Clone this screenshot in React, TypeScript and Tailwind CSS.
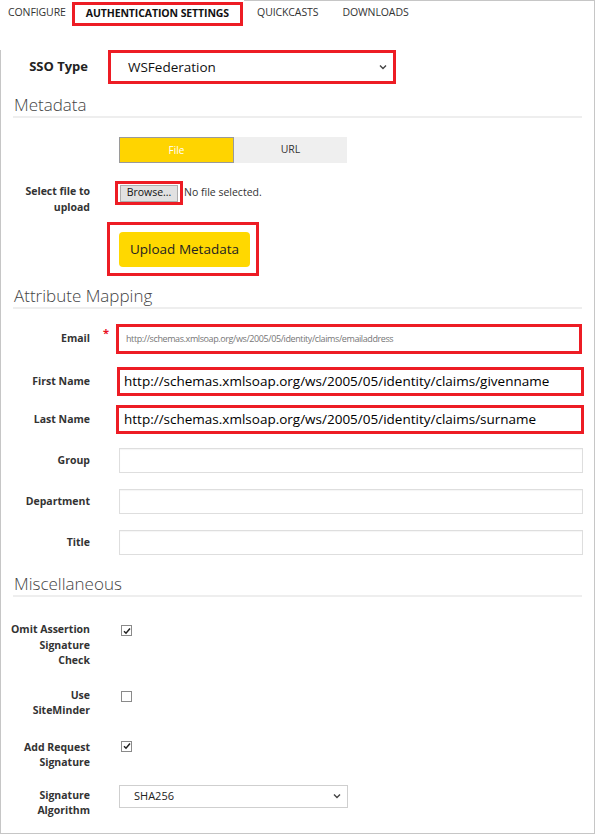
import React from "react";

function Check({ on }: { on: boolean }) {
  return (
    <div className="w-[11px] h-[11px] border border-[#8a8a8a] bg-white flex items-center justify-center">
      {on && (
        <svg width="8" height="8" viewBox="0 0 8 8">
          <path d="M1 4.2 L3 6.2 L7 1.5" fill="none" stroke="#222" strokeWidth="1.5" />
        </svg>
      )}
    </div>
  );
}

function Chevron() {
  return (
    <svg width="8" height="6" viewBox="0 0 8 6">
      <path d="M1 1.5 L4 4.5 L7 1.5" fill="none" stroke="#444" strokeWidth="1.4" />
    </svg>
  );
}

function SectionTitle({ children }: { children: React.ReactNode }) {
  return (
    <div className="mx-[12px] border-b-2 border-[#eeeeee] pb-[1px]">
      <h2 className="text-[17px] leading-[20px] font-light text-[#444] pl-[1px]">{children}</h2>
    </div>
  );
}

function Label({ children }: { children: React.ReactNode }) {
  return (
    <div className="w-[89px] shrink-0 text-right text-[10.5px] leading-[15.5px] font-bold text-[#333]">
      {children}
    </div>
  );
}

function PlainInput() {
  return <div className="ml-[29px] w-[464px] h-[25px] border border-[#dedede] bg-white shadow-[inset_0_1px_1px_rgba(0,0,0,0.04)]" />;
}

export default function App() {
  return (
    <div className="relative w-[595px] h-[834px] bg-white border-r border-b border-[#c6c6c6] font-['Open_Sans',sans-serif] text-[#333] overflow-hidden">
      {/* tabs */}
      <div className="relative h-[30px] flex items-start pt-[4px] text-[10.5px] tracking-[-0.1px] text-[#333]">
        <div className="absolute top-0 left-[244px] right-0 h-px bg-[#c6c6c6]" />
        <span className="ml-[8px] mt-[1px]">CONFIGURE</span>
        <span className="ml-[6px] -mt-[2px] border-[3px] border-[#ed1c24] px-[11px] py-[1px] font-bold text-[#111]">
          AUTHENTICATION SETTINGS
        </span>
        <span className="ml-[14px] mt-[1px]">QUICKCASTS</span>
        <span className="ml-[24px] mt-[1px]">DOWNLOADS</span>
      </div>

      <div className="border-l border-[#c6c6c6] h-[804px]">
        {/* SSO Type */}
        <div className="flex items-center mt-[20px]">
          <div className="w-[87px] text-right text-[13px] font-bold text-[#222]">SSO Type</div>
          <div className="ml-[20px] w-[288px] h-[34px] border-[3px] border-[#ed1c24] bg-white flex items-center justify-between pl-[17px] pr-[6px]">
            <span className="text-[13.5px] text-[#111]">WSFederation</span>
            <Chevron />
          </div>
        </div>

        <div className="mt-[11px]">
          <SectionTitle>Metadata</SectionTitle>
        </div>

        {/* File / URL toggle */}
        <div className="flex ml-[118px] mt-[19px] h-[26px] w-[228px]">
          <div className="w-[115px] h-full bg-[#ffd400] border border-[#9a9a9a] flex items-center justify-center text-[10px] text-white">
            File
          </div>
          <div className="flex-1 h-full bg-[#efefef] flex items-center justify-center text-[10.5px] text-[#333]">
            URL
          </div>
        </div>

        {/* Select file */}
        <div className="flex items-start mt-[18px]">
          <div className="pt-[3px]">
            <Label>
              Select file to
              <br />
              upload
            </Label>
          </div>
          <div className="ml-[25px] h-[24px] w-[68px] border-[3px] border-[#ed1c24] flex items-center justify-center">
            <div className="h-[17px] w-[58px] bg-[#e1e1e1] border border-[#adadad] flex items-center justify-center text-[10.5px] text-[#111]">
              Browse...
            </div>
          </div>
          <span className="ml-[1px] mt-[4px] text-[10.5px] text-[#333]">No file selected.</span>
        </div>

        {/* Upload */}
        <div className="ml-[106px] mt-[7px] w-[152px] h-[54px] border-[3px] border-[#ed1c24] pl-[9px] pt-[7px]">
          <div className="w-[131px] h-[35px] bg-[#ffd800] rounded-[4px] flex items-center justify-center text-[13.5px] text-[#222]">
            Upload Metadata
          </div>
        </div>

        <div className="mt-[10px]">
          <SectionTitle>Attribute Mapping</SectionTitle>
        </div>

        {/* Email */}
        <div className="flex items-center mt-[15px]">
          <Label>Email</Label>
          <div className="relative w-[26px] h-[30px]">
            <span className="absolute left-[13px] top-[1px] text-[11px] text-[#e81123] font-bold">*</span>
          </div>
          <div className="w-[466px] h-[30px] border-[3px] border-[#ed1c24] flex items-center pl-[7px]">
            <span className="text-[9px] text-[#777] tracking-[-0.4px]">
              http://schemas.xmlsoap.org/ws/2005/05/identity/claims/emailaddress
            </span>
          </div>
        </div>

        {/* First Name */}
        <div className="flex items-center mt-[13px]">
          <Label>First Name</Label>
          <div className="ml-[27px] w-[467px] h-[29px] border-[3px] border-[#ed1c24] flex items-center pl-[4px]">
            <span className="text-[13.5px] text-black">http://schemas.xmlsoap.org/ws/2005/05/identity/claims/givenname</span>
          </div>
        </div>

        {/* Last Name */}
        <div className="flex items-center mt-[9px]">
          <Label>Last Name</Label>
          <div className="ml-[26px] w-[468px] h-[29px] border-[3px] border-[#ed1c24] flex items-center pl-[5px]">
            <span className="text-[13.5px] text-black">http://schemas.xmlsoap.org/ws/2005/05/identity/claims/surname</span>
          </div>
        </div>

        <div className="flex items-center mt-[14px]">
          <Label>Group</Label>
          <PlainInput />
        </div>
        <div className="flex items-center mt-[16px]">
          <Label>Department</Label>
          <PlainInput />
        </div>
        <div className="flex items-center mt-[16px]">
          <Label>Title</Label>
          <PlainInput />
        </div>

        <div className="mt-[19px]">
          <SectionTitle>Miscellaneous</SectionTitle>
        </div>

        {/* checkboxes */}
        <div className="flex items-start mt-[25px]">
          <Label>
            Omit Assertion
            <br />
            Signature
            <br />
            Check
          </Label>
          <div className="ml-[31px] mt-[3px]">
            <Check on />
          </div>
        </div>
        <div className="flex items-start mt-[19px]">
          <Label>
            Use
            <br />
            SiteMinder
          </Label>
          <div className="ml-[31px] mt-[3px]">
            <Check on={false} />
          </div>
        </div>
        <div className="flex items-start mt-[21px]">
          <Label>
            Add Request
            <br />
            Signature
          </Label>
          <div className="ml-[31px] mt-[1px]">
            <Check on />
          </div>
        </div>
        <div className="flex items-start mt-[17px]">
          <Label>
            Signature
            <br />
            Algorithm
          </Label>
          <div className="ml-[29px] mt-[-3px] w-[229px] h-[23px] border border-[#cfcfcf] bg-white flex items-center justify-between pl-[14px] pr-[6px]">
            <span className="text-[11px] text-[#222]">SHA256</span>
            <Chevron />
          </div>
        </div>
      </div>
    </div>
  );
}
